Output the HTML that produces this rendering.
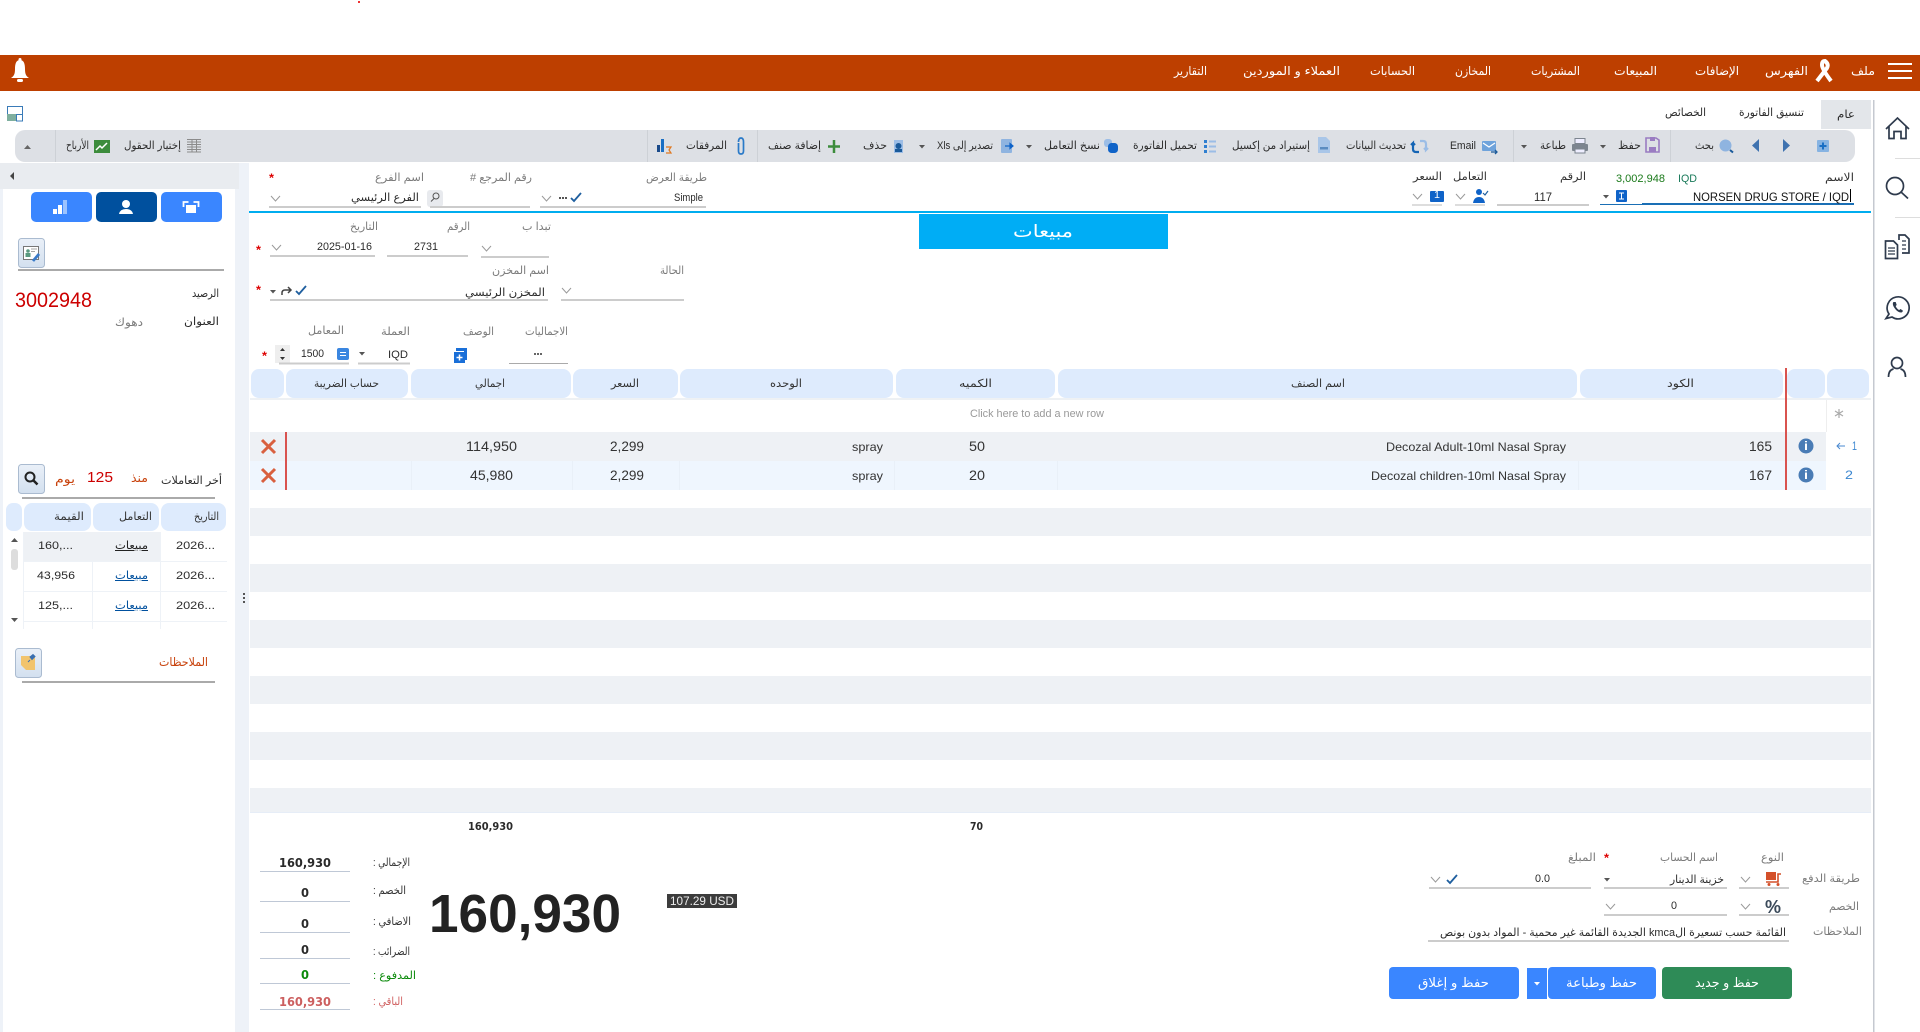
<!DOCTYPE html>
<html lang="ar">
<head>
<meta charset="utf-8">
<title>مبيعات</title>
<style>
html,body{margin:0;padding:0;width:1920px;height:1032px;overflow:hidden;background:#fff}
svg{position:absolute;left:0;top:0}
span{position:absolute;white-space:nowrap;line-height:16px;height:16px;font-family:"Liberation Sans","DejaVu Sans",sans-serif;font-size:11px;color:#2b2b2b;unicode-bidi:plaintext}
.w{color:#fff;font-size:12px}
.g{color:#7b7b7b}
.h{color:#333}
.n{font-size:14px;color:#333}
.o{color:#C8420C;font-size:12px}
.b{font-family:"DejaVu Sans",sans-serif;font-weight:bold;font-size:12px;color:#2a2a2a}
.l{text-decoration:underline;color:#00509E;font-size:11px}
.r{color:#d00;font-weight:bold;font-size:12px}
</style>
</head>
<body>
<svg width="1920" height="1032" viewBox="0 0 1920 1032" xmlns="http://www.w3.org/2000/svg">
<defs>
<path id="ch" d="M0 0l4.5 5 4.5-5" fill="none" stroke="#9a9a9a" stroke-width="1"/>
<path id="tr" d="M0 0h6l-3 3.500z" fill="#555"/>
<path id="ck" d="M0 5l3 3 7-8" fill="none" stroke="#1f5f9f" stroke-width="1.800"/>
<path id="xx" d="M1 1l13 13M14 1L1 14" fill="none" stroke="#D9603F" stroke-width="3"/>
<linearGradient id="gb" x1="0" y1="0" x2="0" y2="1"><stop offset="0" stop-color="#EAF0F8"/><stop offset="1" stop-color="#D3E0EF"/></linearGradient>
</defs>

<rect x="358" y="1" width="2" height="2" fill="#e33"/>
<rect x="0" y="55" width="1920" height="36" fill="#BD3F00"/>
<rect x="1888" y="63" width="24" height="2" fill="#fff"/><rect x="1888" y="70" width="24" height="2" fill="#fff"/><rect x="1888" y="77" width="24" height="2" fill="#fff"/>
<path d="M1817 81L1827 68Q1829 64 1825 61Q1822 61 1822 65Q1822 69 1831 81" fill="none" stroke="#fff" stroke-width="4"/>
<path d="M20 60c-4 0-5 4-5 9 0 5-1 7-4 9h18c-3-2-4-4-4-9 0-5-1-9-5-9z" fill="#fff"/><circle cx="20" cy="59.500" r="1.500" fill="#fff"/><rect x="17" y="79" width="6" height="3" rx="1.500" fill="#fff"/>

<rect x="7.500" y="106.500" width="15" height="8" fill="#fff" stroke="#3a7bb8"/>
<rect x="7" y="114" width="9" height="7" fill="#7faf9f"/><rect x="16.500" y="114.500" width="6" height="6.500" fill="#fff" stroke="#3a7bb8"/>

<rect x="1821" y="100" width="50" height="29" fill="#E3E6EA"/>
<rect x="15" y="130" width="1840" height="32" rx="10" fill="#DDE0E5"/>
<g fill="#CDD1D6"><rect x="1670" y="130" width="1" height="32"/><rect x="1513" y="130" width="1" height="32"/><rect x="757" y="130" width="1" height="32"/><rect x="647" y="130" width="1" height="32"/><rect x="55" y="130" width="1" height="32"/></g>

<rect x="1817" y="140" width="12" height="12" rx="1" fill="#86B3E2"/><path d="M1823 142.500v7M1819.500 146h7" stroke="#1a6fc4" stroke-width="2"/>
<path d="M1783 139l7 6.500-7 6.500z" fill="#3F72AF"/><path d="M1759 139l-7 6.500 7 6.500z" fill="#3F72AF"/>
<circle cx="1725.500" cy="145.500" r="6" fill="#8FB4E0"/><path d="M1730 150l3 2.500" stroke="#1a5a9a" stroke-width="2"/>
<path d="M1646 138h10l3 2v12h-13z" fill="none" stroke="#9A7CC2" stroke-width="1.600"/><rect x="1649" y="147" width="7" height="5" fill="#9A7CC2"/><rect x="1650" y="137" width="5" height="4" fill="#9A7CC2"/>
<use href="#tr" x="1600" y="145"/><use href="#tr" x="1521" y="145"/><use href="#tr" x="1026" y="145"/><use href="#tr" x="919" y="145"/>
<rect x="1572" y="144" width="16" height="7" rx="1" fill="#7c858f"/><rect x="1575" y="138.500" width="10" height="5" fill="#eef" stroke="#7c858f"/><rect x="1575" y="149" width="10" height="4" fill="#eef" stroke="#7c858f"/>
<rect x="1482" y="141" width="14" height="10" rx="1" fill="#6FA3DB"/><path d="M1483 143l6 4 6-4" fill="none" stroke="#fff" stroke-width="1.200"/><path d="M1491 152h6M1495 150l2 2-2 2" fill="none" stroke="#1a5a9a" stroke-width="1.300"/>
<path d="M1419 152h-3q-3 0-3-3v-6l-2 2M1413 143l2 2" fill="none" stroke="#1565b5" stroke-width="2.200"/><path d="M1420 141h3q3 0 3 3v6l2-2M1426 150l-2-2" fill="none" stroke="#9BBDE6" stroke-width="2.200"/>
<path d="M1318 137h8l4 4v12h-12z" fill="#A9C6E8"/><rect x="1320" y="147" width="8" height="2.500" fill="#5b8cc0"/>
<g fill="#2F7FD0"><rect x="1204" y="140" width="3" height="3"/><rect x="1204" y="145" width="3" height="3"/><rect x="1204" y="150" width="3" height="3"/></g>
<g fill="#9BBDE6"><rect x="1209" y="140.500" width="7" height="2"/><rect x="1209" y="145.500" width="7" height="2"/><rect x="1209" y="150.500" width="7" height="2"/></g>
<rect x="1104" y="139" width="8" height="8" rx="3" fill="#9BBDE6"/><rect x="1108" y="143" width="10" height="10" rx="3.500" fill="#0F63C8"/>
<rect x="1001" y="139" width="11" height="14" rx="1" fill="#8FB4E0"/><path d="M1005 146h7M1010 143.500l3 2.500-3 2.500z" fill="#0F63C8" stroke="#0F63C8" stroke-width="1.200"/>
<rect x="894" y="140" width="9" height="13" fill="#9CBDE6"/><circle cx="898.500" cy="146" r="3" fill="#1a5a9a"/><rect x="895" y="149" width="7" height="3" fill="#1a5a9a"/>
<path d="M834 140v13M828 146.500h12" stroke="#3C8C3C" stroke-width="2.500"/>
<path d="M738.500 142q0-4 2.500-4t2.500 4v9q0 3-2.500 3t-2.500-3v-8" fill="none" stroke="#2a7ac8" stroke-width="1.700"/>
<rect x="657" y="145" width="3" height="7" fill="#1a4a8a"/><rect x="661" y="139" width="3" height="13" fill="#1a6fc4"/><path d="M666 147h5l-2 3 2 3h-5" fill="none" stroke="#e07820" stroke-width="1.200"/>
<g fill="#8b8b8b"><rect x="187" y="139" width="14" height="1"/><rect x="187" y="141.500" width="14" height="1"/><rect x="187" y="144" width="14" height="1"/><rect x="187" y="146.500" width="14" height="1"/><rect x="187" y="149" width="14" height="1"/><rect x="187" y="151.500" width="14" height="1"/><rect x="191.500" y="139" width="1" height="13.500"/><rect x="196" y="139" width="1" height="13.500"/></g>
<rect x="94" y="140" width="16" height="13" fill="#3C8C3C"/><path d="M96 150l4-4 2 2 5-5" fill="none" stroke="#fff" stroke-width="1.500"/>
<path d="M24 149l3.500-4 3.500 4z" fill="#666"/>

<rect x="0" y="163" width="3" height="869" fill="#EEF2F8"/><rect x="235" y="163" width="14" height="869" fill="#EEF2F8"/><rect x="0" y="163" width="239" height="26" fill="#E9ECF0"/>
<path d="M14 172l-4 4 4 4z" fill="#444"/>
<rect x="31" y="192" width="61" height="30" rx="5" fill="#3A86FF"/><rect x="96" y="192" width="61" height="30" rx="5" fill="#00509E"/><rect x="161" y="192" width="61" height="30" rx="5" fill="#3A86FF"/>
<rect x="53" y="209" width="4" height="5" fill="#fff"/><rect x="58" y="205" width="4" height="9" fill="#fff"/><rect x="63" y="200" width="4" height="14" fill="#9cc3ff"/>
<circle cx="126" cy="204" r="4" fill="#fff"/><path d="M119 214q1-5 7-5t7 5z" fill="#fff"/>
<rect x="186" y="205" width="10" height="8" fill="#fff"/><path d="M183.500 207v-5h5M193.500 202h5v5" fill="none" stroke="#fff" stroke-width="1.800"/>

<rect x="18.500" y="238.500" width="26" height="29" rx="3" fill="url(#gb)" stroke="#AABBD0"/>
<rect x="23.500" y="246.500" width="15" height="13" fill="#fff" stroke="#777"/><circle cx="28" cy="251" r="1.800" fill="#5a9a80"/><rect x="25.500" y="253" width="5" height="4" fill="#5a9a80"/><path d="M31 249h6M31 251.500h4" stroke="#888" stroke-width=".8"/><path d="M33 261l6-7" stroke="#3a7bc8" stroke-width="2.800"/>
<rect x="18" y="269" width="206" height="2" fill="#aaa"/>

<rect x="18.500" y="464.500" width="26" height="29" rx="3" fill="url(#gb)" stroke="#AABBD0"/>
<circle cx="30" cy="477" r="4.500" fill="none" stroke="#222" stroke-width="2"/><path d="M33.500 480.500l4 4" stroke="#222" stroke-width="2.500"/>
<rect x="22" y="497" width="193" height="2" fill="#aaa"/>
<g fill="#DEEBFD"><rect x="6" y="503" width="16" height="28" rx="7"/><rect x="24" y="503" width="67" height="28" rx="8"/><rect x="93" y="503" width="66" height="28" rx="8"/><rect x="161" y="503" width="65" height="28" rx="8"/></g>
<rect x="23" y="532" width="138" height="29" fill="#EEF1F5"/>
<g fill="#EEF2F7"><rect x="23" y="561" width="204" height="1"/><rect x="23" y="591" width="204" height="1"/><rect x="23" y="621" width="204" height="1"/><rect x="23" y="532" width="1" height="97"/><rect x="92" y="561" width="1" height="68"/><rect x="160" y="532" width="1" height="97"/></g>
<path d="M11 542l3.500-4 3.500 4z" fill="#555"/><rect x="11" y="549" width="7" height="21" rx="3" fill="#ddd"/><path d="M11 618l3.500 4 3.500-4z" fill="#555"/>
<g fill="#555"><rect x="243" y="593" width="2" height="2"/><rect x="243" y="597" width="2" height="2"/><rect x="243" y="601" width="2" height="2"/></g>
<rect x="15.500" y="648.500" width="26" height="29" rx="3" fill="url(#gb)" stroke="#AABBD0"/>
<path d="M21 656h14v14H26l-5-5z" fill="#F2C46D"/><path d="M30 657l3-2.500 2 2-3 3zM30 660l-2 2" fill="#3a6fb0" stroke="#3a6fb0"/>
<rect x="22" y="681" width="193" height="2" fill="#aaa"/>

<rect x="249" y="211" width="1622" height="2" fill="#00ADEF"/>
<rect x="919" y="214" width="249" height="35" fill="#00ADF5"/>

<!-- top form -->
<rect x="1642" y="203" width="212" height="2" fill="#1a6fb5"/><rect x="1600" y="204" width="42" height="1" fill="#1a6fb5"/>
<rect x="1850" y="189" width="1" height="13" fill="#000"/>
<rect x="1616" y="190" width="11" height="12" rx="1" fill="#0F63C8"/><path d="M1619 193h5M1621.500 193v6M1619 199h5" stroke="#fff"/><use href="#tr" x="1603" y="195"/>
<rect x="1497" y="204" width="92" height="2" fill="#ccc"/>
<circle cx="1479" cy="192" r="3" fill="#0F63C8"/><path d="M1473 203q1-6 6-6t6 6z" fill="#0F63C8"/><path d="M1483 193l2 2 3-4" fill="none" stroke="#1f5f9f" stroke-width="1.200"/><use href="#ch" x="1456" y="194"/><rect x="1455" y="204" width="30" height="2" fill="#ddd"/>
<rect x="1430" y="191" width="14" height="11" rx="1" fill="#0F63C8"/><use href="#ch" x="1413" y="194"/><rect x="1412" y="204" width="30" height="2" fill="#ddd"/>
<rect x="540" y="206" width="166" height="2" fill="#ccc"/><use href="#ck" x="571" y="193"/><rect x="559" y="197" width="2" height="2" fill="#555"/><rect x="562" y="197" width="2" height="2" fill="#555"/><rect x="565" y="197" width="2" height="2" fill="#555"/><use href="#ch" x="542" y="196"/>
<rect x="427" y="190" width="16" height="17" rx="3" fill="#E8EAEE"/><circle cx="436" cy="196" r="3" fill="none" stroke="#555"/><path d="M434 198.500l-3 3" stroke="#555"/><rect x="430" y="206" width="100" height="2" fill="#ccc"/>
<use href="#ch" x="271" y="196"/><rect x="269" y="206" width="152" height="2" fill="#ccc"/>

<rect x="270" y="255" width="105" height="2" fill="#ccc"/><use href="#ch" x="272" y="245"/>
<rect x="387" y="255" width="81" height="2" fill="#ccc"/>
<rect x="481" y="256" width="68" height="2" fill="#ccc"/><use href="#ch" x="482" y="246"/>
<rect x="270" y="299" width="278" height="2" fill="#ccc"/><use href="#tr" x="270" y="290"/><path d="M282 295v-2q0-3 3-3h6M288 287l3 3-3 3" fill="none" stroke="#444" stroke-width="1.500"/><use href="#ck" x="296" y="286"/>
<rect x="561" y="299" width="123" height="2" fill="#ccc"/><use href="#ch" x="562" y="288"/>
<rect x="275" y="345" width="15" height="18" fill="#eee"/><path d="M280 351l2.500-3 2.500 3zM280 357l2.500 3 2.500-3z" fill="#333"/>
<rect x="279" y="362.500" width="70" height="2" fill="#ccc"/><rect x="337" y="348" width="12" height="12" rx="2" fill="#3A86E0"/><path d="M340 352.500h6M340 355.500h6" stroke="#fff"/>
<use href="#tr" x="359" y="352"/><rect x="358" y="362.500" width="52" height="2" fill="#ccc"/>
<rect x="456" y="348" width="11" height="12" fill="#1a6fd8"/><rect x="453" y="351" width="11" height="12" fill="#fff"/><rect x="454" y="352" width="11" height="11" fill="#1a6fd8"/><path d="M459.500 354.500v6M456.500 357.500h6" stroke="#fff" stroke-width="1.500"/>
<rect x="534" y="353" width="2" height="2" fill="#666"/><rect x="537" y="353" width="2" height="2" fill="#666"/><rect x="540" y="353" width="2" height="2" fill="#666"/><rect x="509" y="363" width="59" height="1" fill="#aaa"/>

<!-- table -->
<rect x="250" y="398" width="1621" height="2" fill="#EEF1F4"/>
<g fill="#DEEBFD"><rect x="251" y="369" width="33" height="29" rx="8"/><rect x="286" y="369" width="122" height="29" rx="8"/><rect x="411" y="369" width="160" height="29" rx="8"/><rect x="573" y="369" width="105" height="29" rx="8"/><rect x="680" y="369" width="213" height="29" rx="8"/><rect x="896" y="369" width="159" height="29" rx="8"/><rect x="1058" y="369" width="519" height="29" rx="8"/><rect x="1580" y="369" width="203" height="29" rx="8"/><rect x="1787" y="369" width="38" height="29" rx="8"/><rect x="1827" y="369" width="42" height="29" rx="8"/></g>
<rect x="1826" y="400" width="1" height="32" fill="#eee"/>
<path d="M1839 409v9M1835 411l8 5M1843 411l-8 5" stroke="#aaa" stroke-width="1.200"/>
<rect x="250" y="432" width="1576" height="29" fill="#EEF1F5"/><rect x="250" y="461" width="1576" height="29" fill="#EFF6FE"/>
<g fill="#E9F0F8"><rect x="411" y="461" width="1" height="29"/><rect x="572" y="461" width="1" height="29"/><rect x="679" y="461" width="1" height="29"/><rect x="894" y="461" width="1" height="29"/><rect x="1057" y="461" width="1" height="29"/><rect x="1578" y="461" width="1" height="29"/></g>
<rect x="1785" y="368" width="2" height="122" fill="#D9534F"/><rect x="285" y="432" width="2" height="58" fill="#D9534F"/>
<use href="#xx" x="261" y="439"/><use href="#xx" x="261" y="468"/>
<circle cx="1806" cy="446" r="7.500" fill="#4A7CB5"/><circle cx="1806" cy="475" r="7.500" fill="#4A7CB5"/>
<path d="M1845 446h-8M1840 443l-3 3 3 3" fill="none" stroke="#4A8AD0"/>
<g fill="#EEF1F5"><rect x="250" y="508" width="1621" height="28"/><rect x="250" y="564" width="1621" height="28"/><rect x="250" y="620" width="1621" height="28"/><rect x="250" y="676" width="1621" height="28"/><rect x="250" y="732" width="1621" height="28"/><rect x="250" y="788" width="1621" height="24"/></g>
<rect x="250" y="812" width="1621" height="1" fill="#E6EDF7"/>
<rect x="1873" y="100" width="1.500" height="932" fill="#C5C9D0"/>

<!-- totals -->
<g fill="#BFC8D6"><rect x="260" y="871" width="90" height="1"/><rect x="260" y="901" width="90" height="1"/><rect x="260" y="932" width="90" height="1"/><rect x="260" y="958" width="90" height="1"/><rect x="260" y="983" width="90" height="1"/><rect x="260" y="1009" width="90" height="1"/></g>
<rect x="667" y="894" width="70" height="14" fill="#3c3c3c"/>

<!-- payment -->
<rect x="1739" y="887" width="50" height="2" fill="#ccc"/><use href="#ch" x="1741" y="877"/>
<rect x="1766" y="872" width="10" height="8" fill="#D4502A"/><path d="M1781 874h-3v8h-12" fill="none" stroke="#D4502A" stroke-width="1.600"/><circle cx="1769" cy="884.500" r="1.500" fill="#D4502A"/><circle cx="1778" cy="884.500" r="1.500" fill="#D4502A"/>
<rect x="1604" y="887" width="123" height="2" fill="#ccc"/><use href="#tr" x="1604" y="878"/>
<rect x="1429" y="887" width="162" height="2" fill="#ccc"/><use href="#ck" x="1447" y="875"/><use href="#ch" x="1431" y="877"/>
<rect x="1739" y="914" width="50" height="2" fill="#ccc"/><use href="#ch" x="1741" y="904"/>
<rect x="1604" y="914" width="123" height="2" fill="#ccc"/><use href="#ch" x="1606" y="904"/>
<rect x="1428" y="940" width="361" height="2" fill="#ccc"/>
<rect x="1662" y="967" width="130" height="32" rx="4" fill="#2E8B57"/>
<rect x="1548" y="967" width="108" height="32" rx="4" fill="#3A86FF"/>
<rect x="1527" y="968" width="20" height="31" fill="#3A86FF"/><path d="M1534 982h6l-3 3.500z" fill="#fff"/>
<rect x="1389" y="967" width="130" height="32" rx="4" fill="#3A86FF"/>

<!-- right side -->
<g fill="none" stroke="#2e3a4c" stroke-width="1.700">
<path d="M1886 129l11.500-11 11.500 11M1889 126v12.500h5v-7h7v7h5v-12.500"/>
<circle cx="1895" cy="186" r="8.500"/><path d="M1901 192l7 6.500"/>
<path d="M1899 240v-5h6l4 4v14h-7"/><path d="M1885.500 241h8l4 4v13.500h-12z"/><path d="M1888 248h7M1888 251h7M1888 254h7M1902 241h4M1902 245h4M1902 249h4" stroke-width="1.200"/>
<path d="M1889 314a11 11 0 1 1 3 3l-6 1.500z"/>
<circle cx="1897" cy="363" r="5.500"/><path d="M1888.500 377q0-7 5-8M1905.500 377q0-7-5-8"/>
</g>
<path d="M1893.500 302c-1 1-1 3 1 6s4.500 4.500 6.500 4.500c1.200 0 2-1 1.800-2l-2.300-1.500-1.300 1c-1.500-.5-3-2.500-3.500-4l1-1-1-3z" fill="#2e3a4c"/>
<rect x="1895" y="158" width="25" height="1" fill="#ddd"/><rect x="1895" y="217" width="25" height="1" fill="#ddd"/>
</svg>

<!-- menu -->
<span class="w" style="left:1851px;top:63px;width:24px">ملف</span>
<span class="w" style="left:1765px;top:63px;width:43px">الفهرس</span>
<span class="w" style="left:1695px;top:63px;width:44px">الإضافات</span>
<span class="w" style="left:1614px;top:63px;width:43px">المبيعات</span>
<span class="w" style="left:1531px;top:63px;width:49px">المشتريات</span>
<span class="w" style="left:1455px;top:63px;width:36px">المخازن</span>
<span class="w" style="left:1370px;top:63px;width:45px">الحسابات</span>
<span class="w" style="left:1243px;top:63px;width:97px">العملاء و الموردين</span>
<span class="w" style="left:1174px;top:63px;width:33px">التقارير</span>
<!-- tabs -->
<span style="left:1837px;top:107px;width:18px">عام</span>
<span style="left:1739px;top:105px;width:65px">تنسيق الفاتورة</span>
<span style="left:1665px;top:105px;width:41px">الخصائص</span>
<!-- toolbar -->
<span style="left:1695px;top:138px;width:19px">بحث</span>
<span style="left:1618px;top:138px;width:23px">حفظ</span>
<span style="left:1540px;top:138px;width:26px">طباعة</span>
<span style="left:1450px;top:138px;width:26px">Email</span>
<span style="left:1346px;top:138px;width:60px">تحديث البيانات</span>
<span style="left:1232px;top:138px;width:78px">إستيراد من إكسيل</span>
<span style="left:1133px;top:138px;width:64px">تحميل الفاتورة</span>
<span style="left:1044px;top:138px;width:56px">نسخ التعامل</span>
<span style="left:937px;top:138px;width:56px">تصدير إلى Xls</span>
<span style="left:863px;top:138px;width:24px">حذف</span>
<span style="left:768px;top:138px;width:53px">إضافة صنف</span>
<span style="left:686px;top:138px;width:41px">المرفقات</span>
<span style="left:124px;top:138px;width:57px">إختيار الحقول</span>
<span style="left:66px;top:138px;width:23px">الأرباح</span>
<!-- left panel -->
<span style="left:192px;top:286px;width:27px">الرصيد</span>
<span style="left:15px;top:293px;width:77px;font-size:21px;color:#C00;line-height:16px">3002948</span>
<span style="left:184px;top:314px;width:35px">العنوان</span>
<span class="g" style="left:115px;top:315px;width:28px">دهوك</span>
<span style="left:161px;top:473px;width:61px">أخر التعاملات</span>
<span class="o" style="left:131px;top:470px;width:17px">منذ</span>
<span style="left:87px;top:470px;width:26px;font-size:15px;color:#C00">125</span>
<span class="o" style="left:55px;top:471px;width:20px">يوم</span>
<span class="h" style="left:54px;top:509px;width:30px">القيمة</span>
<span class="h" style="left:119px;top:509px;width:33px">التعامل</span>
<span class="h" style="left:194px;top:509px;width:25px">التاريخ</span>
<span style="left:38px;top:538px;width:35px">160,...</span><span class="l" style="left:115px;top:538px;width:33px;color:#222">مبيعات</span><span style="left:176px;top:538px;width:39px">2026...</span>
<span style="left:37px;top:568px;width:38px">43,956</span><span class="l" style="left:115px;top:568px;width:33px">مبيعات</span><span style="left:176px;top:568px;width:39px">2026...</span>
<span style="left:38px;top:598px;width:35px">125,...</span><span class="l" style="left:115px;top:598px;width:33px">مبيعات</span><span style="left:176px;top:598px;width:39px">2026...</span>
<span class="o" style="left:159px;top:654px;width:49px">الملاحظات</span>
<!-- form top -->
<span class="h" style="left:1825px;top:170px;width:29px">الاسم</span>
<span style="left:1616px;top:171px;width:49px;color:#1a7a1a">3,002,948</span>
<span style="left:1678px;top:171px;width:19px;color:#1a7a5a">IQD</span>
<span class="h" style="left:1560px;top:169px;width:26px">الرقم</span>
<span class="h" style="left:1453px;top:169px;width:34px">التعامل</span>
<span class="h" style="left:1413px;top:169px;width:29px">السعر</span>
<span style="left:1693px;top:189px;width:156px;font-size:12px;color:#111">NORSEN DRUG STORE / IQD</span>
<span style="left:1534px;top:189px;width:18px;font-size:12px">117</span>
<span class="w" style="left:1434px;top:188px;width:6px;font-size:10px">1</span>
<span class="g" style="left:646px;top:170px;width:61px">طريقة العرض</span>
<span class="g" style="left:470px;top:170px;width:62px">رقم المرجع #</span>
<span class="g" style="left:375px;top:170px;width:49px">اسم الفرع</span>
<span class="r" style="left:269px;top:170px;width:5px">*</span>
<span style="left:674px;top:190px;width:29px">Simple</span>
<span style="left:351px;top:190px;width:68px">الفرع الرئيسي</span>
<span class="w" style="left:1013px;top:224px;width:60px;font-size:17px">مبيعات</span>
<span class="g" style="left:350px;top:219px;width:28px">التاريخ</span>
<span class="g" style="left:447px;top:219px;width:23px">الرقم</span>
<span class="g" style="left:522px;top:219px;width:29px">تبدا ب</span>
<span class="r" style="left:256px;top:242px;width:5px">*</span>
<span style="left:317px;top:239px;width:55px">2025-01-16</span>
<span style="left:414px;top:239px;width:24px">2731</span>
<span class="g" style="left:492px;top:263px;width:57px">اسم المخزن</span>
<span class="g" style="left:660px;top:263px;width:24px">الحالة</span>
<span class="r" style="left:256px;top:282px;width:5px">*</span>
<span style="left:465px;top:285px;width:80px">المخزن الرئيسي</span>
<span class="g" style="left:308px;top:323px;width:36px">المعامل</span>
<span class="g" style="left:381px;top:324px;width:29px">العملة</span>
<span class="g" style="left:463px;top:324px;width:31px">الوصف</span>
<span class="g" style="left:525px;top:324px;width:43px">الاجماليات</span>
<span class="r" style="left:262px;top:348px;width:5px">*</span>
<span style="left:301px;top:346px;width:23px">1500</span>
<span style="left:388px;top:347px;width:20px">IQD</span>
<!-- table header -->
<span class="h" style="left:314px;top:376px;width:65px">حساب الضريبة</span>
<span class="h" style="left:475px;top:376px;width:30px">اجمالي</span>
<span class="h" style="left:611px;top:376px;width:28px">السعر</span>
<span class="h" style="left:770px;top:376px;width:32px">الوحده</span>
<span class="h" style="left:959px;top:376px;width:33px">الكميه</span>
<span class="h" style="left:1291px;top:376px;width:54px">اسم الصنف</span>
<span class="h" style="left:1667px;top:376px;width:27px">الكود</span>
<span style="left:970px;top:406px;width:134px;color:#999">Click here to add a new row</span>
<!-- rows -->
<span class="n" style="left:466px;top:438px;width:51px">114,950</span>
<span class="n" style="left:610px;top:438px;width:34px">2,299</span>
<span class="n" style="left:852px;top:439px;width:31px;font-size:12px">spray</span>
<span class="n" style="left:969px;top:438px;width:16px">50</span>
<span class="n" style="left:1386px;top:439px;width:180px;font-size:12px">Decozal Adult-10ml Nasal Spray</span>
<span class="n" style="left:1749px;top:438px;width:23px">165</span>
<span style="left:1804px;top:438px;width:4px;color:#fff;font-weight:bold;font-size:12px">i</span>
<span class="n" style="left:1852px;top:438px;width:5px;font-size:12px;color:#3a86d0">1</span>
<span class="n" style="left:470px;top:467px;width:43px">45,980</span>
<span class="n" style="left:610px;top:467px;width:34px">2,299</span>
<span class="n" style="left:852px;top:468px;width:31px;font-size:12px">spray</span>
<span class="n" style="left:969px;top:467px;width:16px">20</span>
<span class="n" style="left:1371px;top:468px;width:195px;font-size:12px">Decozal children-10ml Nasal Spray</span>
<span class="n" style="left:1749px;top:467px;width:23px">167</span>
<span style="left:1804px;top:467px;width:4px;color:#fff;font-weight:bold;font-size:12px">i</span>
<span class="n" style="left:1845px;top:467px;width:8px;font-size:12px;color:#3a86d0">2</span>
<!-- totals -->
<span class="b" style="left:468px;top:819px;width:45px;font-size:11px">160,930</span>
<span class="b" style="left:970px;top:819px;width:13px;font-size:11px">70</span>
<span class="h" style="left:373px;top:855px;width:37px">الإجمالي :</span>
<span class="h" style="left:373px;top:883px;width:33px">الخصم :</span>
<span class="h" style="left:373px;top:914px;width:38px">الاضافي :</span>
<span class="h" style="left:373px;top:944px;width:37px">الضرائب :</span>
<span style="left:373px;top:968px;width:43px;color:#0a8a0a">المدفوع :</span>
<span style="left:373px;top:994px;width:30px;color:#D06060">الباقي :</span>
<span class="b" style="left:279px;top:855px;width:52px">160,930</span>
<span class="b" style="left:301px;top:885px;width:8px">0</span>
<span class="b" style="left:301px;top:916px;width:8px">0</span>
<span class="b" style="left:301px;top:942px;width:8px">0</span>
<span class="b" style="left:301px;top:967px;width:8px;color:#0a8a0a">0</span>
<span class="b" style="left:279px;top:994px;width:52px;color:#CC5F5F">160,930</span>
<span style="left:429px;top:906px;width:192px;font-size:54px;font-weight:bold;color:#222">160,930</span>
<span style="left:670px;top:893px;width:64px;color:#eee;font-size:12px">107.29 USD</span>
<!-- payment -->
<span class="g" style="left:1761px;top:850px;width:23px">النوع</span>
<span class="g" style="left:1660px;top:850px;width:58px">اسم الحساب</span>
<span class="r" style="left:1604px;top:850px;width:5px">*</span>
<span class="g" style="left:1568px;top:850px;width:28px">المبلغ</span>
<span class="g" style="left:1802px;top:871px;width:58px">طريقة الدفع</span>
<span style="left:1670px;top:872px;width:54px">خزينة الدينار</span>
<span style="left:1535px;top:871px;width:15px">0.0</span>
<span class="g" style="left:1829px;top:899px;width:30px">الخصم</span>
<span style="left:1765px;top:899px;width:16px;font-size:18px;font-weight:bold;color:#3b4a5a">%</span>
<span style="left:1671px;top:898px;width:6px">0</span>
<span class="g" style="left:1813px;top:924px;width:49px">الملاحظات</span>
<span style="left:1440px;top:925px;width:346px">القائمة حسب تسعيرة الkmca الجديدة القائمة غير محمية - المواد بدون بونص</span>
<span class="w" style="left:1695px;top:975px;width:64px;font-size:13px">حفظ و جديد</span>
<span class="w" style="left:1566px;top:975px;width:71px;font-size:13px">حفظ وطباعة</span>
<span class="w" style="left:1418px;top:975px;width:71px;font-size:13px">حفظ و إغلاق</span>

<script>
document.querySelectorAll('span').forEach(function(s){
  var w=parseFloat(s.style.width);
  if(!w)return;
  s.style.width='auto';
  var n=s.getBoundingClientRect().width;
  if(!n)return;
  s.style.width=n+'px';
  s.style.transformOrigin='0 50%';
  s.style.transform='scaleX('+(w/n)+')';
});
</script>
</body>
</html>
